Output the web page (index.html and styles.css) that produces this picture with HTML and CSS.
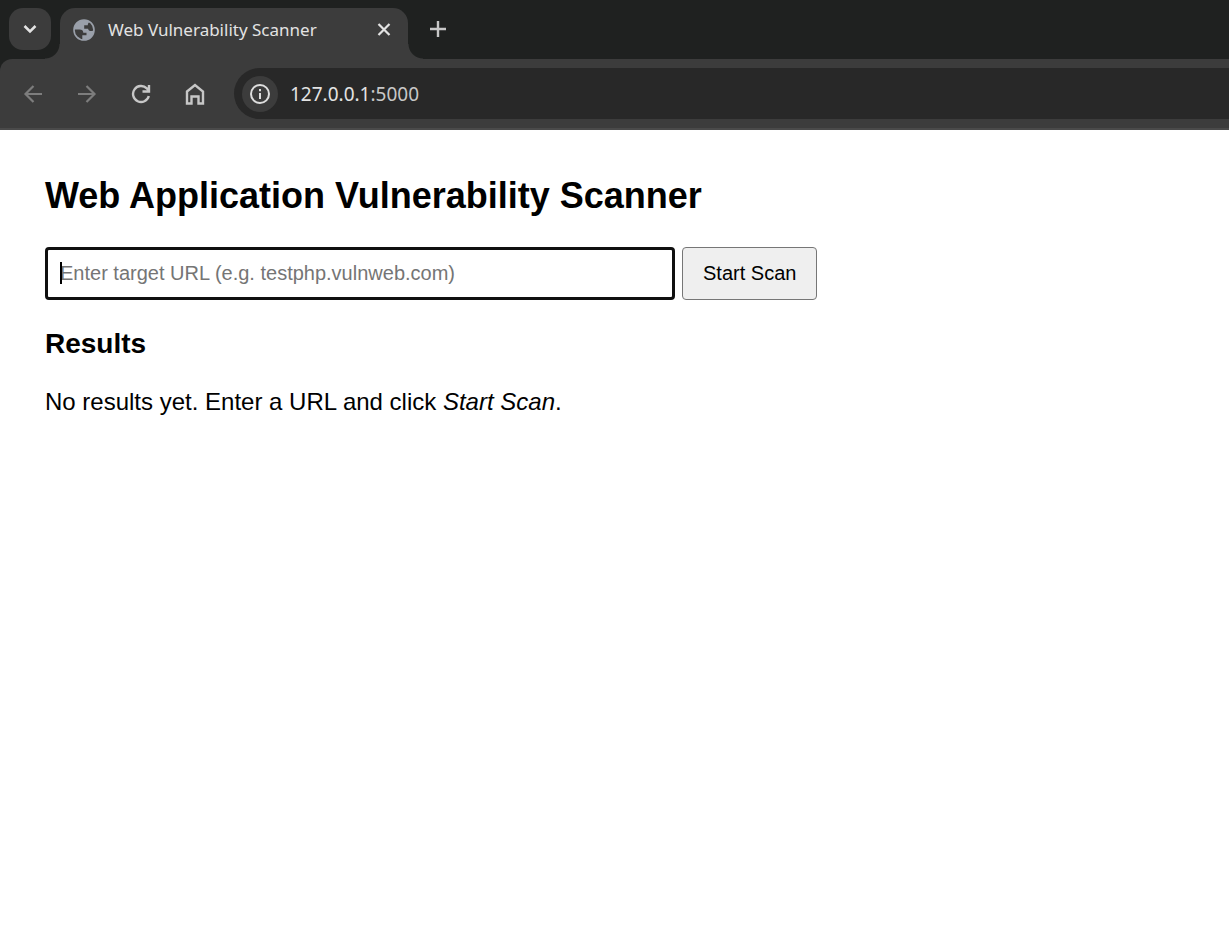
FILE: index.html
```html
<!DOCTYPE html>
<html lang="en">
<head>
<meta charset="utf-8">
<title>Web Vulnerability Scanner</title>
<link rel="stylesheet" href="styles.css">
</head>
<body>
<header class="browser">
  <div class="tab-strip">
    <button class="tab-search" type="button" aria-label="Search tabs">
      <svg width="14" height="14" viewBox="0 0 14 14" fill="none" stroke="#e3e3e3" stroke-width="2.500"><path d="M1.500 4 7 9.500 12.500 4"/></svg>
    </button>
    <div class="tab">
      <svg class="favicon" width="22" height="22" viewBox="0 0 22 22"><circle cx="11" cy="11" r="10" fill="#3c3c3c" stroke="#9aa0aa" stroke-width="1.600"/><path fill="#9aa0aa" d="M12 1C6 1 1 5.500 1 10.500h5.500c2.500 0 3.800 1.200 3.800 3.300h3.200v2.500H9.300v4.500L11 21c5.500 0 10-4.500 10-10v-.5c-.6 1-1.600 1.500-2.800 1.500-1.800 0-2.900-.8-3.100-2.300h-3.900V6.300h3.600c0-1.500.6-2.700 1.900-3.300C15.500 1.800 13.500 1 12 1Z"/></svg>
      <span class="tab-title">Web Vulnerability Scanner</span>
      <button class="tab-close" type="button" aria-label="Close tab">
        <svg width="14" height="14" viewBox="0 0 14 14" stroke="#e3e3e3" stroke-width="2.200"><path d="m1.500 1 11 11m0-11-11 11"/></svg>
      </button>
    </div>
    <button class="new-tab" type="button" aria-label="New tab">
      <svg width="16" height="16" viewBox="0 0 16 16" stroke="#c7c7c7" stroke-width="2.400"><path d="M8 0v16M0 8h16"/></svg>
    </button>
  </div>
  <nav class="toolbar">
    <button class="nav-button" type="button" aria-label="Back">
      <svg width="20" height="20" viewBox="0 0 20 20" fill="none" stroke="#7d7d7d" stroke-width="2.200"><path d="M19 10H2.500m8-8-8 8 8 8"/></svg>
    </button>
    <button class="nav-button" type="button" aria-label="Forward">
      <svg width="20" height="20" viewBox="0 0 20 20" fill="none" stroke="#7d7d7d" stroke-width="2.200"><path d="M1 10h16.500m-8-8 8 8-8 8"/></svg>
    </button>
    <button class="nav-button" type="button" aria-label="Reload">
      <svg width="20" height="20" viewBox="0 0 20 20" fill="none" stroke="#c7c7c7" stroke-width="2.400"><path d="M17.800 12A8 8 0 1 1 15.800 4.400L18 6.600M18 1v6.500h-6.500"/></svg>
    </button>
    <button class="nav-button" type="button" aria-label="Home">
      <svg width="20" height="22" viewBox="0 0 20 22" fill="none" stroke="#c7c7c7" stroke-width="2.400"><path d="M2 8.500 10 2l8 6.500V20.500h-4.500v-7h-7v7H2Z"/></svg>
    </button>
    <div class="address-bar">
      <button class="site-info" type="button" aria-label="View site information">
        <svg width="20" height="20" viewBox="0 0 20 20" fill="none" stroke="#dedede" stroke-width="2"><circle cx="10" cy="10" r="9"/><path d="M10 9v6M10 5v2.200"/></svg>
      </button>
      <span class="address">127.0.0.1<span class="port">:5000</span></span>
    </div>
  </nav>
</header>
<main class="page">
  <h2 class="title">Web Application Vulnerability Scanner</h2>
  <form class="scan-form">
    <div class="field">
      <input class="target" type="text" name="target" aria-label="Target URL" placeholder="Enter target URL (e.g. testphp.vulnweb.com)">
      <span class="caret"></span>
    </div>
    <button class="scan" type="button">Start Scan</button>
  </form>
  <h3 class="subtitle">Results</h3>
  <p class="message">No results yet. Enter a URL and click <em>Start Scan</em>.</p>
</main>
</body>
</html>
```
FILE: styles.css
```css
* { box-sizing: border-box; }
body {
  margin: 0;
  background: #fff;
  color: #000;
  font-family: "Liberation Sans", Arial, sans-serif;
}
button { padding: 0; border: 0; background: transparent; }
svg { display: block; flex: none; }

.browser {
  background: #1f2120;
  font-family: "Noto Sans", "Segoe UI", sans-serif;
}
.tab-strip {
  display: flex;
  align-items: flex-start;
  padding: 8px 9px 0;
}
.tab-search {
  display: grid;
  place-items: center;
  width: 42px;
  height: 42px;
  margin-right: 9px;
  border-radius: 14px;
  background: #3c3c3c;
}
.tab {
  position: relative;
  display: flex;
  align-items: center;
  width: 348px;
  height: 51px;
  padding: 0 17px 8px 13px;
  border-radius: 15px 15px 0 0;
  background: #3c3c3c;
}
.tab::before,
.tab::after {
  content: "";
  position: absolute;
  bottom: 0;
  width: 15px;
  height: 15px;
}
.tab::before {
  right: 100%;
  background: radial-gradient(circle at 0 0, transparent 14px, #3c3c3c 15px);
}
.tab::after {
  left: 100%;
  background: radial-gradient(circle at 100% 0, transparent 14px, #3c3c3c 15px);
}
.tab-title {
  flex: 1;
  margin-left: 13px;
  color: #e3e3e3;
  font-size: 17px;
  line-height: 24px;
  white-space: nowrap;
}
.new-tab {
  display: grid;
  place-items: center;
  width: 42px;
  height: 42px;
  margin-left: 9px;
}
.toolbar {
  display: flex;
  align-items: center;
  gap: 12px;
  height: 71px;
  padding-left: 12px;
  border-bottom: 2px solid #4a4a4a;
  border-radius: 12px 0 0 0;
  background: #3c3c3c;
}
.nav-button {
  display: grid;
  place-items: center;
  width: 42px;
  height: 42px;
}
.address-bar {
  flex: 1;
  display: flex;
  align-items: center;
  height: 51px;
  margin-left: 6px;
  padding-left: 8px;
  border-radius: 26px 0 0 26px;
  background: #282828;
}
.site-info {
  display: grid;
  place-items: center;
  width: 36px;
  height: 36px;
  border-radius: 50%;
  background: #3c3c3c;
}
.address {
  margin-left: 12px;
  color: #e3e3e3;
  font-size: 19px;
  line-height: 28px;
}
.port { color: #c7c7c7; }

.page { padding: 45px; }
.title {
  margin: 0 0 30px;
  font-size: 36px;
  line-height: 42px;
}
.scan-form {
  display: flex;
  gap: 7px;
}
.field {
  position: relative;
  width: 630px;
}
.target {
  display: block;
  width: 100%;
  height: 53px;
  padding: 0 12px;
  border: 3px solid #101010;
  border-radius: 4px;
  background: #fff;
  font: 20px "Liberation Sans", Arial, sans-serif;
}
.target::placeholder { color: #757575; }
.caret {
  position: absolute;
  top: 15px;
  left: 15px;
  width: 2px;
  height: 22px;
  background: #000;
}
.scan {
  height: 53px;
  padding: 0 20px;
  border: 1px solid #767676;
  border-radius: 4px;
  background: #efefef;
  color: #000;
  font: 20px "Liberation Sans", Arial, sans-serif;
}
.subtitle {
  margin: 28px 0;
  font-size: 28px;
  line-height: 32px;
}
.message {
  margin: 0;
  font-size: 24px;
  line-height: 28px;
}
```
